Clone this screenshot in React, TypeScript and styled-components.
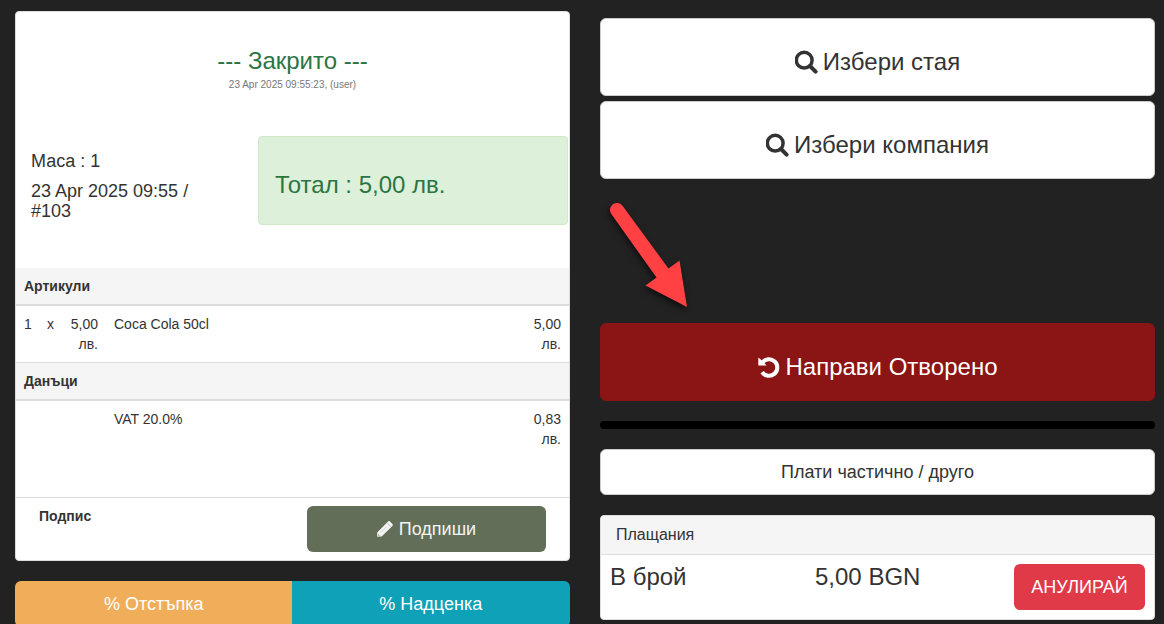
import React from "react";
import styled, { createGlobalStyle, css } from "styled-components";

const Global = createGlobalStyle`
  *, *::before, *::after { box-sizing: border-box; }
  body {
    margin: 0;
    background: #222;
    color: #333;
    font: 14px/20px "Liberation Sans", Arial, sans-serif;
    overflow: hidden;
  }
  h2, h3, h4, p { margin: 0; font-weight: 400; }
`;

const Page = styled.main`
  display: grid;
  grid-template-columns: minmax(0, 1fr) minmax(0, 1fr);
  column-gap: 30px;
  padding: 11px 9px 0 15px;
`;

const Panel = styled.section`
  background: #fff;
  border: 1px solid #ddd;
  border-radius: 4px;
`;

const Status = styled.header`
  height: 124px;
  padding-top: 36px;
  text-align: center;
`;

const StatusTitle = styled.h2`
  color: #2b7543;
  font-size: 24px;
  line-height: 26px;
`;

const StatusNote = styled.p`
  color: #777;
  font-size: 10px;
  line-height: 22px;
`;

const Summary = styled.div`
  display: grid;
  grid-template-columns: 242px minmax(0, 1fr);
  align-items: start;
  padding-right: 1px;
  height: 132px;
`;

const TableInfo = styled.div`
  display: grid;
  gap: 10px;
  padding: 15px 40px 0 15px;
  font-size: 18px;
`;

const Total = styled.h3`
  padding: 35px 16px 26px;
  color: #2b7543;
  background: #ddf0da;
  border: 1px solid #d0e9c6;
  border-radius: 4px;
  font-size: 24px;
  line-height: 26px;
`;

const Lines = styled.table`
  width: 100%;
  border-collapse: separate;
  border-spacing: 0;
  table-layout: fixed;

  th, td { padding: 8px; text-align: left; vertical-align: top; }
  th {
    background: #f5f5f5;
    border-bottom: 2px solid #ddd;
  }
  tbody + tbody th { border-top: 1px solid #ddd; }
`;

const Amount = styled.td`
  && { text-align: right; }
`;

const TaxRow = styled.tr`
  height: 96px;
`;

const Signature = styled.div`
  display: flex;
  justify-content: space-between;
  align-items: flex-start;
  padding: 8px 23px 8px;
  border-top: 1px solid #ddd;
`;

const buttonBase = css`
  display: flex;
  align-items: center;
  justify-content: center;
  gap: 4px;
  font-family: inherit;
  font-size: 18px;
  line-height: 24px;
  border: 1px solid transparent;
  border-radius: 6px;
  padding: 10px 16px;
  cursor: pointer;
`;

const SignButton = styled.button`
  ${buttonBase}
  width: 239px;
  height: 46px;
  color: #f4f4f4;
  background: #626e57;
`;

const Adjust = styled.div`
  display: grid;
  grid-template-columns: 1fr 1fr;
  margin-top: 20px;
`;

const AdjustButton = styled.button<{ $tone: string; $side: "left" | "right" }>`
  ${buttonBase}
  height: 46px;
  color: #fff;
  background: ${(p) => p.$tone};
  border-radius: ${(p) => (p.$side === "left" ? "6px 0 0 6px" : "0 6px 6px 0")};
  margin-left: ${(p) => (p.$side === "left" ? "0" : "-1px")};
`;

const Actions = styled.div`
  display: flex;
  flex-direction: column;
  padding-top: 7px;
`;

const LargeButton = styled.button<{ $danger?: boolean }>`
  ${buttonBase}
  height: 78px;
  padding-top: 19px;
  font-size: 24px;
  line-height: 26px;
  color: ${(p) => (p.$danger ? "#fff" : "#333")};
  background: ${(p) => (p.$danger ? "#8b1414" : "#fff")};
  border-color: ${(p) => (p.$danger ? "#8b1414" : "#ccc")};
`;

const PickList = styled.div`
  display: grid;
  gap: 5px;
`;

const Pointer = styled.div`
  height: 144px;
  padding: 20px 0 0 4px;

  svg { display: block; filter: drop-shadow(-1px 3px 3px rgba(0, 0, 0, 0.6)); overflow: visible; }
`;

const Divider = styled.hr`
  width: 100%;
  height: 8px;
  margin: 20px 0;
  background: #000;
  border: 0;
  border-radius: 4px;
`;

const PartialButton = styled.button`
  ${buttonBase}
  height: 46px;
  margin-bottom: 20px;
  color: #333;
  background: #fff;
  border-color: #ccc;
`;

const PanelHeading = styled.h4`
  padding: 9px 15px;
  background: #f5f5f5;
  border-bottom: 1px solid #ddd;
  border-radius: 3px 3px 0 0;
  font-size: 16px;
`;

const Payment = styled.div`
  display: grid;
  grid-template-columns: 205px minmax(0, 1fr) auto;
  padding: 9px;
  font-size: 24px;
  line-height: 26px;
`;

const CancelButton = styled.button`
  ${buttonBase}
  width: 131px;
  height: 46px;
  color: #fff;
  background: #e03948;
`;

const SearchIcon = () => (
  <svg width="24" height="24" viewBox="0 0 24 24" fill="none" stroke="currentColor" aria-hidden="true">
    <circle cx="9.200" cy="10.200" r="7.900" strokeWidth="3.500" />
    <path d="M15 16L20.600 21.600" strokeWidth="4" strokeLinecap="round" />
  </svg>
);

const UndoIcon = () => (
  <svg width="24" height="24" viewBox="0 0 24 24" fill="none" aria-hidden="true">
    <path d="M4.400 7.500A8.300 8.300 0 1 1 4.100 17.200" stroke="currentColor" strokeWidth="4" />
    <path d="M0.300 2.500L3 4.800L8.600 10.400H0.300Z" fill="currentColor" />
  </svg>
);

const PencilIcon = () => (
  <svg width="18" height="18" viewBox="0 0 18 18" fill="none" aria-hidden="true">
    <path
      d="M0.200 16.800V12.400L11 1.500Q12 0.500 13 1.500L15.400 3.900Q16.400 4.900 15.400 5.900L4.600 16.600Z"
      fill="currentColor"
    />
    <path d="M10.200 3L14 6.800" stroke="#626e57" strokeOpacity="0.500" strokeWidth="0.800" />
    <path d="M3.500 12.800L9.500 6.800" stroke="#626e57" strokeOpacity="0.300" strokeWidth="0.800" />
    <path d="M1.400 14.100L2.900 15.600L1.400 15.700Z" fill="#626e57" />
  </svg>
);

export default function App() {
  return (
    <>
      <Global />
      <Page>
        <div>
          <Panel>
            <Status>
              <StatusTitle>--- Закрито ---</StatusTitle>
              <StatusNote>23 Apr 2025 09:55:23, (user)</StatusNote>
            </Status>
            <Summary>
              <TableInfo>
                <p>Маса : 1</p>
                <p>23 Apr 2025 09:55 / #103</p>
              </TableInfo>
              <Total>Тотал : 5,00 лв.</Total>
            </Summary>
            <Lines>
              <colgroup>
                <col width="23" />
                <col width="23" />
                <col width="44" />
                <col />
                <col width="52" />
              </colgroup>
              <tbody>
                <tr><th colSpan={5}>Артикули</th></tr>
                <tr>
                  <td>1</td>
                  <td>x</td>
                  <Amount>5,00 лв.</Amount>
                  <td>Coca Cola 50cl</td>
                  <Amount>5,00 лв.</Amount>
                </tr>
              </tbody>
              <tbody>
                <tr><th colSpan={5}>Данъци</th></tr>
                <TaxRow>
                  <td colSpan={3} />
                  <td>VAT 20.0%</td>
                  <Amount>0,83 лв.</Amount>
                </TaxRow>
              </tbody>
            </Lines>
            <Signature>
              <strong>Подпис</strong>
              <SignButton type="button"><PencilIcon />Подпиши</SignButton>
            </Signature>
          </Panel>
          <Adjust>
            <AdjustButton type="button" $tone="#f0ae5b" $side="left">% Отстъпка</AdjustButton>
            <AdjustButton type="button" $tone="#0fa1b8" $side="right">% Надценка</AdjustButton>
          </Adjust>
        </div>
        <Actions>
          <PickList>
            <LargeButton type="button"><SearchIcon />Избери стая</LargeButton>
            <LargeButton type="button"><SearchIcon />Избери компания</LargeButton>
          </PickList>
          <Pointer>
            <svg width="90" height="110" viewBox="604 199 90 110" aria-hidden="true">
              <path fill="#ff4143" d="M611.300 214.100A7 7 0 0 1 622.700 205.900L668.500 268.500L679.500 260.500L687 307L645.500 285.500L656.500 277.500Z" />
            </svg>
          </Pointer>
          <LargeButton type="button" $danger><UndoIcon />Направи Отворено</LargeButton>
          <Divider />
          <PartialButton type="button">Плати частично / друго</PartialButton>
          <Panel>
            <PanelHeading>Плащания</PanelHeading>
            <Payment>
              <span>В брой</span>
              <span>5,00 BGN</span>
              <CancelButton type="button">АНУЛИРАЙ</CancelButton>
            </Payment>
          </Panel>
        </Actions>
      </Page>
    </>
  );
}
